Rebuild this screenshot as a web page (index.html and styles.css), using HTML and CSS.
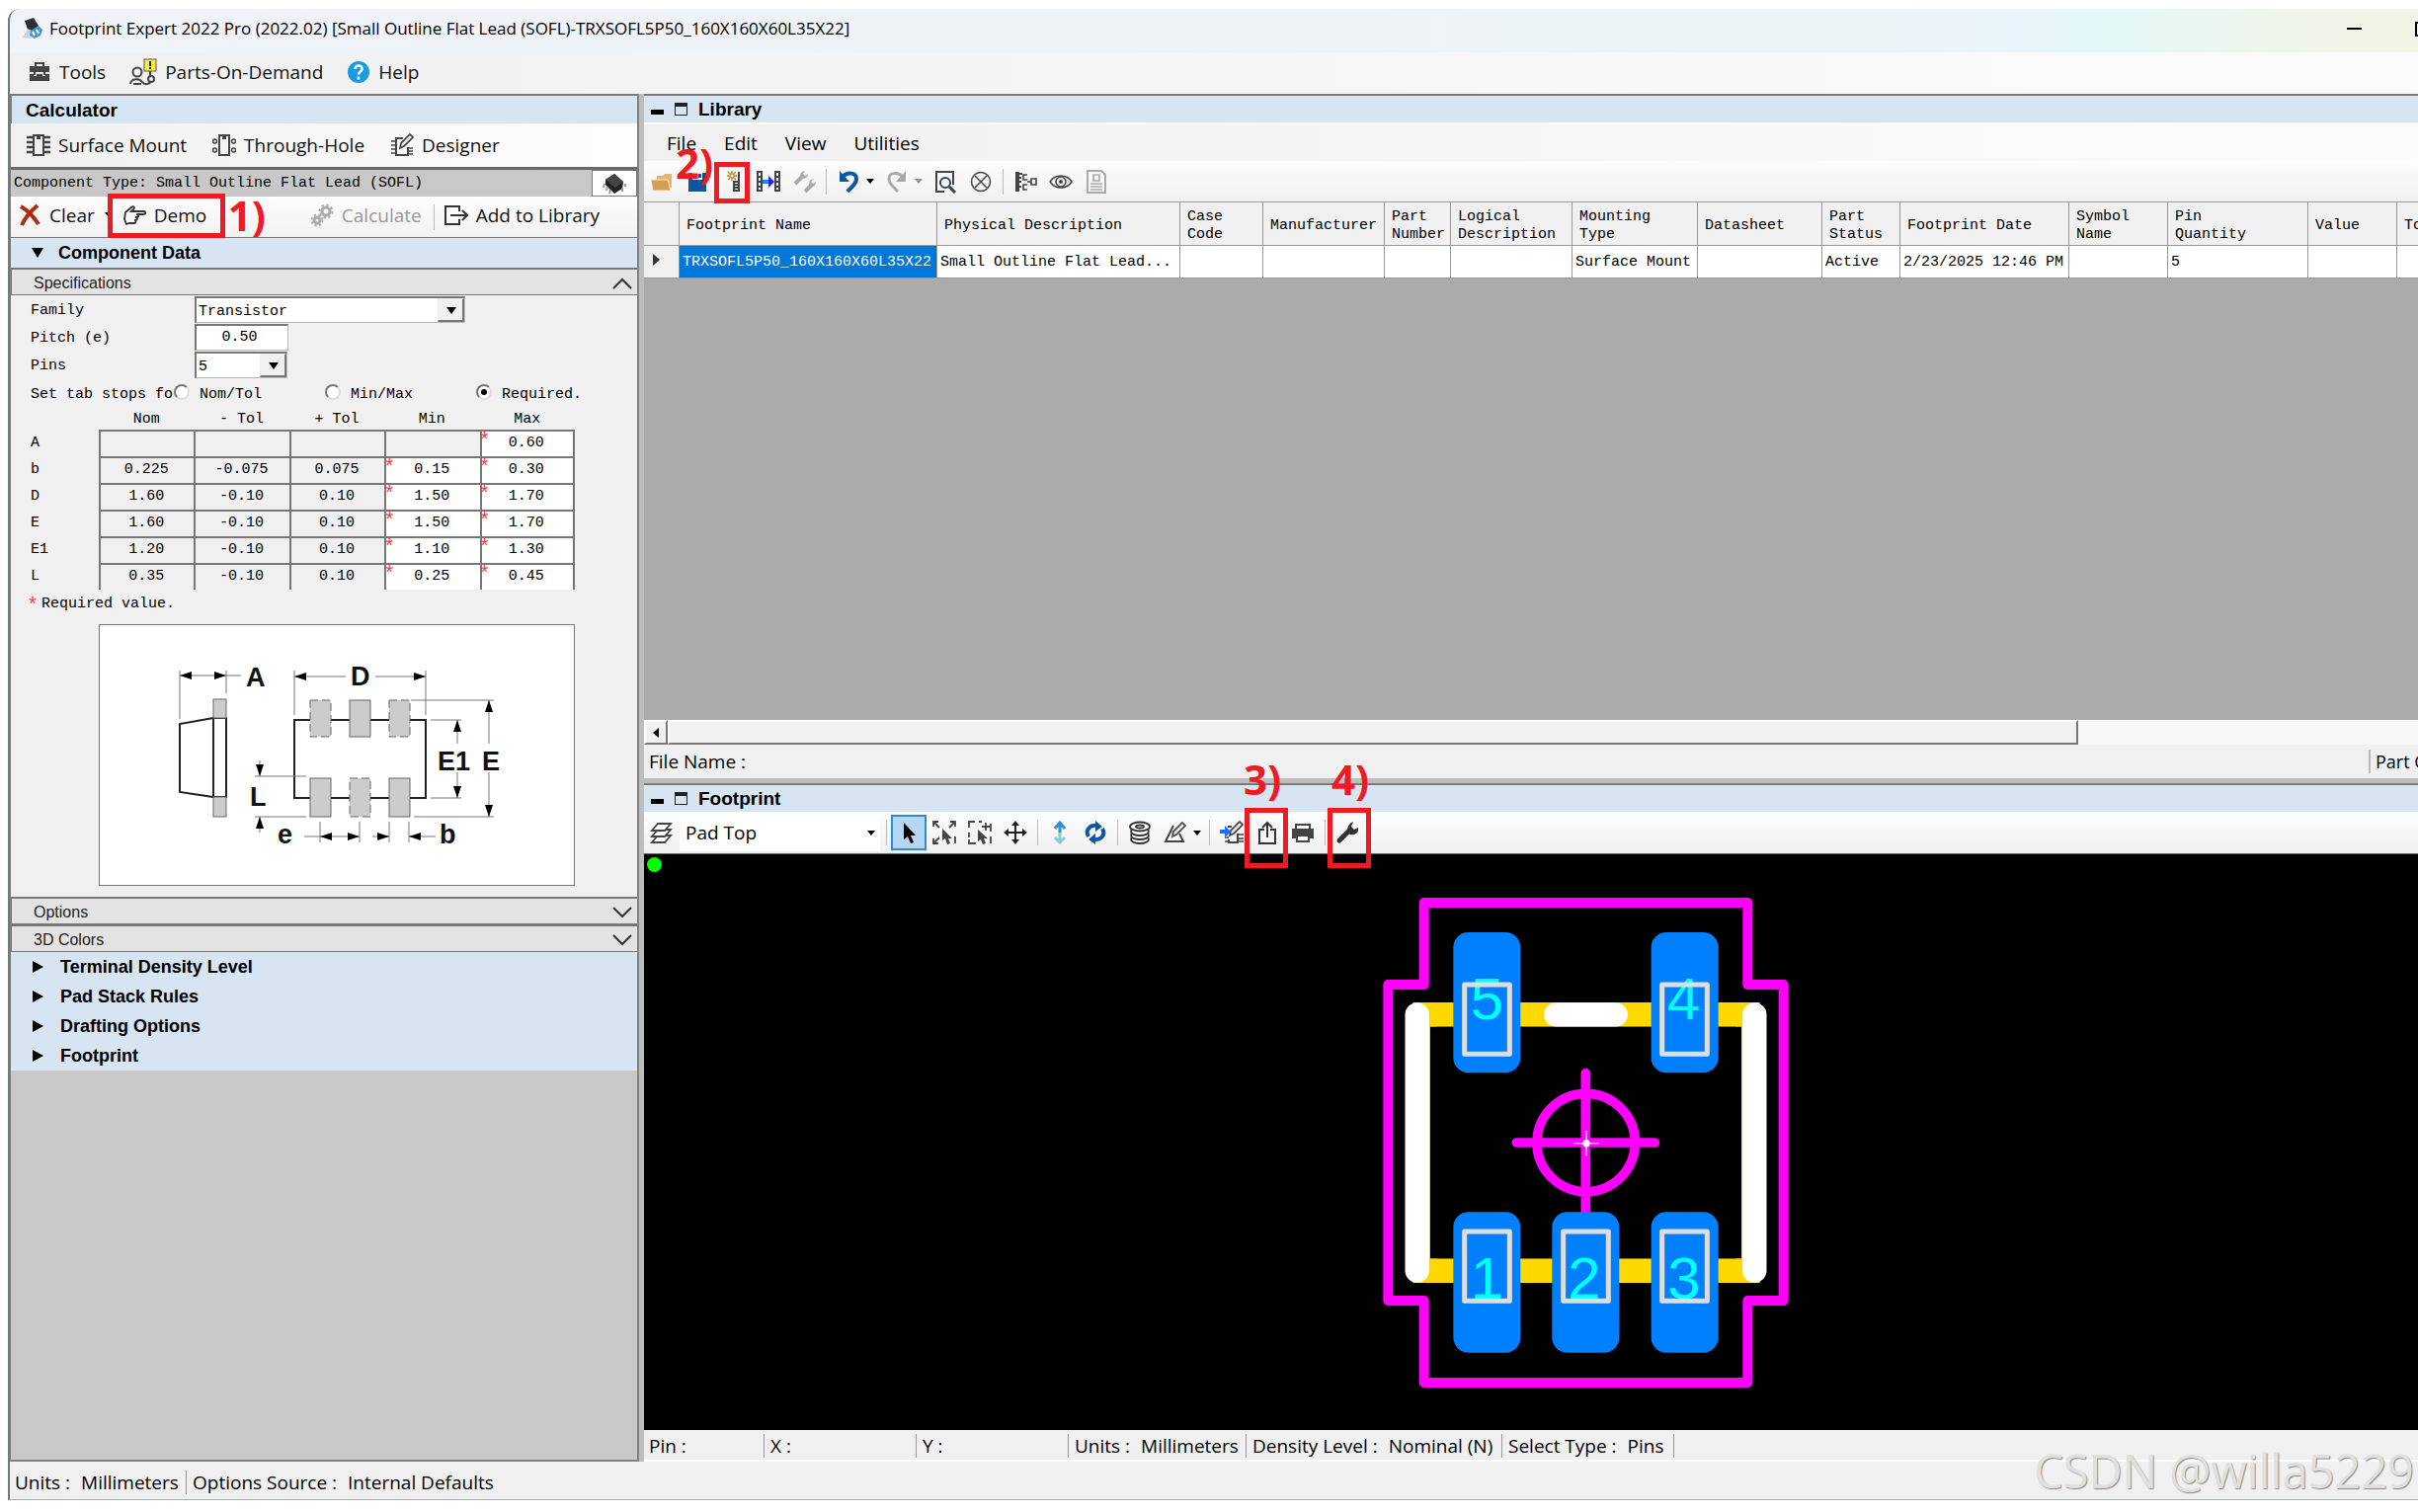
FILE: index.html
```html
<!DOCTYPE html>
<html lang="en">
<head>
<meta charset="utf-8">
<title>Footprint Expert 2022 Pro</title>
<link rel="stylesheet" href="styles.css">
</head>
<body>
<div class="app">
  <header class="titlebar">
    <svg class="icon" viewBox="0 0 24 24"><path d="M3 4l9-3 5 8-2 7-9-3z" fill="#2b3036"/><path d="M1 21l5-9 6 3-3 7z" fill="#c9d3da"/><path d="M9 14l8-5 4 4-2 6-6 3-5-3z" fill="#4d94cf"/><path d="M11 15l2 4M15 13l2 4" stroke="#fff" stroke-width="2"/></svg>
    <span class="title-text">Footprint Expert 2022 Pro (2022.02) [Small Outline Flat Lead (SOFL)-TRXSOFL5P50_160X160X60L35X22]</span>
    <div class="win-controls">
      <button aria-label="Minimize" class="win-min"></button>
      <button aria-label="Maximize" class="win-max"></button>
    </div>
  </header>

  <nav class="menubar">
    <button class="tool"><svg class="icon" viewBox="0 0 24 24"><path d="M8 6V3h8v3" fill="none" stroke="#444" stroke-width="2"/><path d="M2 6h20v6H2zM2 14h4v2h3v-2h6v2h3v-2h4v7H2z" fill="#444"/><path d="M7 12v3M17 12v3" stroke="#444" stroke-width="2"/></svg>Tools</button>
    <button class="tool pod"><svg class="icon wide" viewBox="0 0 28 28"><rect x="15" y="1" width="12" height="12" fill="#ffef3a" stroke="#555" stroke-width="1"/><path d="M21 3v5M21 9v2" stroke="#222" stroke-width="2"/><circle cx="8" cy="14" r="4.500" fill="none" stroke="#444" stroke-width="2"/><path d="M1 26c1-6 9-6 12-2 2 3 7 3 9-1M4 26h8M21 13v6" fill="none" stroke="#444" stroke-width="2"/><circle cx="22" cy="21" r="3" fill="none" stroke="#444" stroke-width="2"/></svg>Parts-On-Demand</button>
    <button class="tool"><svg class="icon" viewBox="0 0 24 24"><circle cx="12" cy="12" r="11" fill="#189be0"/><path d="M8.500 9c0-5 7.500-4.500 7 0-.3 2.500-3.500 2.500-3.500 5.500M12 16.500v3" fill="none" stroke="#fff" stroke-width="2.600"/></svg>Help</button>
  </nav>

  <main class="workspace">
    <section class="calculator">
      <h2 class="pane-title plain">Calculator</h2>
      <div class="bar calc-types">
        <button class="tool"><svg class="icon" viewBox="0 0 24 24"><path d="M7 2h10v20H7z" fill="none" stroke="#444" stroke-width="2"/><path d="M10 3h4v3h-4z" fill="#444"/><path d="M0 4h6M0 9h6M0 14h6M0 19h6M18 4h6M18 9h6M18 14h6M18 19h6" stroke="#444" stroke-width="2.400"/></svg>Surface Mount</button>
        <button class="tool"><svg class="icon" viewBox="0 0 24 24"><path d="M7 2h10v20H7z" fill="none" stroke="#444" stroke-width="2"/><path d="M10 3h4v3h-4z" fill="#444"/><g fill="none" stroke="#444" stroke-width="1.500"><circle cx="2.500" cy="8" r="2"/><circle cx="2.500" cy="17" r="2"/><circle cx="21.500" cy="8" r="2"/><circle cx="21.500" cy="17" r="2"/></g></svg>Through-Hole</button>
        <button class="tool"><svg class="icon" viewBox="0 0 24 24"><path d="M13 5H6v17h12v-8" fill="none" stroke="#444" stroke-width="2"/><path d="M1 8h5M1 12h5M1 16h5M1 20h5M18 15h5M18 18h5M18 21h5" stroke="#444" stroke-width="1.600"/><path d="M10 15l1-5 9-9 3 3-9 9z" fill="#eee" stroke="#444" stroke-width="1.700"/></svg>Designer</button>
      </div>
      <div class="type-row">
        <span class="type-name">Component Type: Small Outline Flat Lead (SOFL)</span>
        <button class="chip" aria-label="Component picture"><svg class="icon" viewBox="0 0 24 24"><path d="M3 8l9-6 9 8-1 7-8 5-9-9z" fill="#222"/><path d="M3 8l9-6 9 8-8 6z" fill="#444"/><path d="M2 12l-1 4M5 15l-1 4M8 18l-1 4M23 12v3M20 16v4" stroke="#999" stroke-width="2"/></svg></button>
      </div>
      <div class="bar actions">
        <button class="tool clear"><svg class="icon" viewBox="0 0 24 24"><path d="M3 3c7 4 14 12 18 18M20 2C13 8 7 15 4 22" fill="none" stroke="#ad2b10" stroke-width="4"/></svg>Clear<svg class="caret" viewBox="0 0 10 6"><path d="M0 0h10L5 6z"/></svg></button>
        <button class="tool demo"><svg class="icon" viewBox="0 0 24 24"><path d="M4 21l-2-5 1-7 6-5c2-2 4 0 2 2L9 8h12c3 0 3 3 0 3h-7c3 0 3 3 0 3h-1c3 0 2 3 0 3h-1c2 0 2 3 0 3H7z" fill="none" stroke="#333" stroke-width="1.800"/></svg>Demo<span class="callout"></span><b class="mark">1)</b></button>
        <button class="tool calc" disabled><svg class="icon" viewBox="0 0 24 24"><g fill="none" stroke="#aaa"><circle cx="16" cy="8" r="4" stroke-width="3"/><circle cx="16" cy="8" r="6.500" stroke-width="2" stroke-dasharray="2.500 2.500"/><circle cx="7" cy="17" r="3" stroke-width="3"/><circle cx="7" cy="17" r="5.500" stroke-width="2" stroke-dasharray="2.200 2.200"/></g></svg>Calculate</button>
        <span class="sep"></span>
        <button class="tool add"><svg class="icon" viewBox="0 0 24 24"><path d="M15 8V3H1v18h14v-5M6 12h16M18 7l5 5-5 5" fill="none" stroke="#333" stroke-width="2"/></svg>Add to Library</button>
      </div>
      <button class="tree open"><svg class="tri" viewBox="0 0 12 12"><path d="M0 1h12L6 11z"/></svg>Component Data</button>
      <button class="fold">Specifications<svg class="chev" viewBox="0 0 20 12"><path d="M1 11l9-9 9 9"/></svg></button>

      <div class="specs">
        <div class="form">
          <label for="family">Family</label><span class="combo family"><select id="family"><option>Transistor</option></select></span>
          <label for="pitch">Pitch (e)</label><input class="box" id="pitch" value="0.50">
          <label for="pins">Pins</label><span class="combo pins"><select id="pins"><option>5</option></select></span>
        </div>
        <div class="stops">
          <span class="stops-label">Set tab stops fo</span>
          <label><input type="radio" name="stops">Nom/Tol</label>
          <label><input type="radio" name="stops">Min/Max</label>
          <label><input type="radio" name="stops" checked>Required.</label>
        </div>
        <table class="dims">
          <thead><tr><td></td><th>Nom</th><th>- Tol</th><th>+ Tol</th><th>Min</th><th>Max</th></tr></thead>
          <tbody>
            <tr><th>A</th><td><input aria-label="A nom"></td><td><input aria-label="A minus tol"></td><td><input aria-label="A plus tol"></td><td><input aria-label="A min"></td><td class="req"><input aria-label="A max" value="0.60"></td></tr>
            <tr><th>b</th><td><input aria-label="b nom" value="0.225"></td><td><input aria-label="b minus tol" value="-0.075"></td><td><input aria-label="b plus tol" value="0.075"></td><td class="req"><input aria-label="b min" value="0.15"></td><td class="req"><input aria-label="b max" value="0.30"></td></tr>
            <tr><th>D</th><td><input aria-label="D nom" value="1.60"></td><td><input aria-label="D minus tol" value="-0.10"></td><td><input aria-label="D plus tol" value="0.10"></td><td class="req"><input aria-label="D min" value="1.50"></td><td class="req"><input aria-label="D max" value="1.70"></td></tr>
            <tr><th>E</th><td><input aria-label="E nom" value="1.60"></td><td><input aria-label="E minus tol" value="-0.10"></td><td><input aria-label="E plus tol" value="0.10"></td><td class="req"><input aria-label="E min" value="1.50"></td><td class="req"><input aria-label="E max" value="1.70"></td></tr>
            <tr><th>E1</th><td><input aria-label="E1 nom" value="1.20"></td><td><input aria-label="E1 minus tol" value="-0.10"></td><td><input aria-label="E1 plus tol" value="0.10"></td><td class="req"><input aria-label="E1 min" value="1.10"></td><td class="req"><input aria-label="E1 max" value="1.30"></td></tr>
            <tr><th>L</th><td><input aria-label="L nom" value="0.35"></td><td><input aria-label="L minus tol" value="-0.10"></td><td><input aria-label="L plus tol" value="0.10"></td><td class="req"><input aria-label="L min" value="0.25"></td><td class="req"><input aria-label="L max" value="0.45"></td></tr>
          </tbody>
        </table>
        <p class="note"><span class="star">*</span>Required value.</p>
        <svg class="diagram" viewBox="0 0 480 263">
          <defs><marker id="ar" viewBox="0 0 12 8" refX="12" refY="4" markerWidth="12" markerHeight="8" markerUnits="userSpaceOnUse" orient="auto-start-reverse"><path d="M0 0L12 4 0 8z"/></marker></defs>
          <g fill="none" stroke="#222" stroke-width="2"><path d="M115 94L81 100v69l34 5z"/><rect x="115" y="94" width="13" height="80"/><rect x="197" y="96" width="133" height="79"/></g>
          <g fill="#ccc" stroke="#666"><rect x="115" y="75" width="13" height="19"/><rect x="115" y="174" width="13" height="20"/><rect x="253" y="76" width="21" height="37"/><rect x="213" y="155" width="21" height="39"/><rect x="293" y="155" width="21" height="39"/><g stroke-dasharray="8 4"><rect x="213" y="76" width="21" height="37"/><rect x="293" y="76" width="21" height="37"/><rect x="253" y="155" width="21" height="39"/></g></g>
          <g fill="none" stroke="#777"><path d="M81 46v49M128 46v23M128 51h15M197 46v45M330 46v45M315 76h84M318 194h81M335 96h31M335 175h31M157 153h52M157 194h52M223 199v21M263 199v21M293 199v21M313 199v21M207 214h16"/>
          <path marker-start="url(#ar)" marker-end="url(#ar)" d="M81 51h47"/>
          <path marker-start="url(#ar)" marker-end="url(#ar)" d="M223 214h40"/><path marker-start="url(#ar)" d="M197 52h52"/><path marker-end="url(#ar)" d="M279 52h51"/><path marker-start="url(#ar)" d="M394 76v44"/><path marker-end="url(#ar)" d="M394 149v45"/><path marker-start="url(#ar)" d="M362 96v24"/><path marker-end="url(#ar)" d="M362 149v26"/><path marker-end="url(#ar)" d="M162 137v16"/><path marker-start="url(#ar)" d="M162 194v16"/><path marker-end="url(#ar)" d="M276 214h17"/><path marker-start="url(#ar)" d="M313 214h27"/></g>
          <g class="dia-text"><text x="148" y="62">A</text><text x="254" y="61">D</text><text x="342" y="147">E1</text><text x="387" y="147">E</text><text x="152" y="183">L</text><text x="180" y="221">e</text><text x="344" y="221">b</text></g>
        </svg>
      </div>

      <button class="fold">Options<svg class="chev" viewBox="0 0 20 12"><path d="M1 1l9 9 9-9"/></svg></button>
      <button class="fold">3D Colors<svg class="chev" viewBox="0 0 20 12"><path d="M1 1l9 9 9-9"/></svg></button>
      <button class="tree"><svg class="tri" viewBox="0 0 12 12"><path d="M1 0v12l11-6z"/></svg>Terminal Density Level</button>
      <button class="tree"><svg class="tri" viewBox="0 0 12 12"><path d="M1 0v12l11-6z"/></svg>Pad Stack Rules</button>
      <button class="tree"><svg class="tri" viewBox="0 0 12 12"><path d="M1 0v12l11-6z"/></svg>Drafting Options</button>
      <button class="tree"><svg class="tri" viewBox="0 0 12 12"><path d="M1 0v12l11-6z"/></svg>Footprint</button>
    </section>

    <div class="right">
      <section class="library">
        <h2 class="pane-title"><span class="p-min"></span><span class="p-max"></span>Library</h2>
        <nav class="lib-menu"><button>File</button><button>Edit</button><button>View</button><button>Utilities</button></nav>
        <div class="iconbar">
          <button aria-label="Open"><svg class="icon" viewBox="0 0 24 24"><path d="M7 6h6l2-2h7v14H7z" fill="#e2b56f"/><path d="M1 10h17l3 11H3z" fill="#d39f52" stroke="#f6e7cd"/></svg></button>
          <button aria-label="Save" class="anchor"><svg class="icon" viewBox="0 0 24 24"><path d="M3 3h18v19H3z" fill="#0a58a5"/><path d="M7 3h10v7H7z" fill="#fff"/><path d="M13 4h3v4h-3z" fill="#0a58a5"/></svg><b class="mark">2)</b></button>
          <button aria-label="New" class="anchor"><svg class="icon" viewBox="0 0 24 24"><path d="M13 12h5v9h-5zM13 15h5M13 18h5M18 12V2" fill="none" stroke="#444" stroke-width="2"/><path d="M11 1v10M6 6h10M7 2l8 8M15 2l-8 8" stroke="#c08024" stroke-width="1.400"/><circle cx="11" cy="6" r="2" fill="#fff" stroke="#c08024"/></svg><span class="callout"></span></button>
          <button aria-label="Copy rows"><svg class="icon" viewBox="0 0 24 24"><path d="M1 2h4v19H1zM19 2h4v19h-4z" fill="#fff" stroke="#444" stroke-width="2"/><path d="M1 7h4M1 12h4M1 17h4M19 7h4M19 12h4M19 17h4" stroke="#444" stroke-width="2"/><path d="M6 10h7v4H6z" fill="#1488ff"/><path d="M12 6l6 6-6 6z" fill="#2222ee"/></svg></button>
          <button aria-label="Options"><svg class="icon" viewBox="0 0 24 24"><path d="M3 14l7-7M13 22l7-7" stroke="#aaa" stroke-width="4"/><path d="M13 1c-4 0-6 4-4 7 3 2 7 0 7-4l-3 2-2-2zM22 9c-4 0-6 4-4 7 3 2 6 0 6-4l-3 2-2-2z" fill="#aaa"/></svg></button>
          <span class="sep"></span>
          <button aria-label="Undo"><svg class="icon" viewBox="0 0 24 24"><path d="M5 8c5-6 15-6 15 1 0 6-5 8-9 13" fill="none" stroke="#0a58a5" stroke-width="4"/><path d="M3 1v11h10z" fill="#0a58a5"/></svg></button>
          <span class="drop"><svg class="caret" viewBox="0 0 10 6"><path d="M0 0h10L5 6z"/></svg></span>
          <button aria-label="Redo"><svg class="icon" viewBox="0 0 24 24"><path d="M19 8C14 2 4 2 4 9c0 6 5 8 9 13" fill="none" stroke="#aaa" stroke-width="3"/><path d="M21 1v11H11z" fill="#aaa"/></svg></button>
          <span class="drop off"><svg class="caret" viewBox="0 0 10 6"><path d="M0 0h10L5 6z"/></svg></span>
          <button aria-label="Find"><svg class="icon" viewBox="0 0 24 24"><path d="M11 22H3V2h17v13" fill="none" stroke="#444" stroke-width="2"/><circle cx="12" cy="13" r="5" fill="none" stroke="#345" stroke-width="2"/><path d="M16 17l6 6" stroke="#345" stroke-width="3"/></svg></button>
          <button aria-label="Cancel"><svg class="icon" viewBox="0 0 24 24"><circle cx="12" cy="12" r="9.500" fill="none" stroke="#444" stroke-width="1.500"/><path d="M6 6l12 12M18 6L6 18" stroke="#444" stroke-width="1.500"/></svg></button>
          <span class="sep"></span>
          <button aria-label="Tree view"><svg class="icon" viewBox="0 0 24 24"><path d="M2 2h4v20H2z" fill="#444"/><path d="M6 4h3M6 8h2M6 12h2M6 17h2" stroke="#444" stroke-width="2"/><path d="M14 5h-4v5h4M14 15h-4v5h4M14 12h4M18 9h5v6h-5z" fill="none" stroke="#444" stroke-width="1.600"/></svg></button>
          <button aria-label="Show"><svg class="icon" viewBox="0 0 24 24"><path d="M1 12c5-8 17-8 22 0-5 8-17 8-22 0z" fill="#eee" stroke="#444" stroke-width="1.500"/><circle cx="12" cy="12" r="5" fill="none" stroke="#444" stroke-width="1.500"/><circle cx="12" cy="12" r="2" fill="#444"/></svg></button>
          <button aria-label="Report"><svg class="icon" viewBox="0 0 24 24"><path d="M3 1h14l4 4v18H3z" fill="none" stroke="#aaa" stroke-width="2"/><path d="M9 5h6v6H9zM6 14h12M6 17h12M6 20h12" fill="none" stroke="#aaa" stroke-width="1.700"/></svg></button>
        </div>
        <div class="grid-wrap">
          <table class="grid">
            <colgroup><col class="w36"><col class="w261"><col class="w246"><col class="w84"><col class="w123"><col class="w67"><col class="w123"><col class="w127"><col class="w126"><col class="w79"><col class="w171"><col class="w100"><col class="w142"><col class="w90"><col class="w84"></colgroup>
            <thead><tr><td></td><th>Footprint Name</th><th>Physical Description</th><th>Case<br>Code</th><th>Manufacturer</th><th>Part<br>Number</th><th>Logical<br>Description</th><th>Mounting<br>Type</th><th>Datasheet</th><th>Part<br>Status</th><th>Footprint Date</th><th>Symbol<br>Name</th><th>Pin<br>Quantity</th><th>Value</th><th>To</th></tr></thead>
            <tbody><tr><td class="rowhead"><svg class="tri" viewBox="0 0 12 12"><path d="M2 0v12l7-6z" fill="#333"/></svg></td><td class="sel">TRXSOFL5P50_160X160X60L35X22</td><td>Small Outline Flat Lead...</td><td></td><td></td><td></td><td></td><td>Surface Mount</td><td></td><td>Active</td><td>2/23/2025 12:46 PM</td><td></td><td>5</td><td></td><td></td></tr></tbody>
          </table>
        </div>
        <div class="scroll"><button aria-label="Scroll left"><svg viewBox="0 0 6 10"><path d="M6 0v10L0 5z"/></svg></button><span class="thumb"></span></div>
        <div class="lib-status"><span>File Name :</span><span class="part">Part C</span></div>
      </section>

      <section class="footprint">
        <h2 class="pane-title"><span class="p-min"></span><span class="p-max"></span>Footprint</h2>
        <div class="iconbar tall">
          <button aria-label="Layers"><svg class="icon" viewBox="0 0 24 24"><g fill="#fff" stroke="#444" stroke-width="1.800"><path d="M2 22l6-7h13l-6 7z"/><path d="M2 16l6-7h13l-6 7z"/><path d="M2 10l6-7h13l-6 7z"/></g></svg></button>
          <span class="layer"><select aria-label="Layer"><option>Pad Top</option></select><svg class="caret" viewBox="0 0 10 6"><path d="M0 0h10L5 6z"/></svg></span>
          <span class="sep"></span>
          <button aria-label="Select" class="on"><svg class="icon" viewBox="0 0 24 24"><path d="M7 2v17l4-3 3 7 3-1-3-7h5z"/></svg></button>
          <button aria-label="Zoom fit"><svg class="icon" viewBox="0 0 24 24"><path d="M1 6V1h5M1 1l6 6M18 1h5v5M23 1l-6 6M1 18v5h5M1 23l6-6M23 16v7" fill="none" stroke="#444" stroke-width="1.800"/><path d="M10 8v12l3-2 2 6 3-1-2-5h4z" fill="#444"/></svg></button>
          <button aria-label="Zoom area"><svg class="icon" viewBox="0 0 24 24"><path d="M1 7V1h6M18 2v8M14 6h8M1 12v5M1 19v4h7M11 1h3M23 3v8M23 16v7" fill="none" stroke="#444" stroke-width="1.800"/><path d="M10 9v12l3-2 2 5 3-1-2-5h4z" fill="#444"/></svg></button>
          <button aria-label="Pan"><svg class="icon" viewBox="0 0 24 24"><path d="M12 4v16M4 12h16" stroke="#222" stroke-width="2"/><path d="M12 0l4 5H8zM12 24l4-5H8zM0 12l5-4v8zM24 12l-5-4v8z" fill="#222"/></svg></button>
          <span class="sep"></span>
          <button aria-label="Flip"><svg class="icon" viewBox="0 0 24 24"><path d="M12 4v8M7 8l5-6 5 6" fill="none" stroke="#2d92c8" stroke-width="3"/><path d="M12 12v8M7 17l5 5 5-5" fill="none" stroke="#8fc9cd" stroke-width="3"/></svg></button>
          <button aria-label="Rotate"><svg class="icon" viewBox="0 0 24 24"><path d="M5 16C1 9 7 4 14 5M19 8c4 7-2 12-9 11" fill="none" stroke="#0a58a5" stroke-width="4"/><path d="M12 0v11l7-5zM12 24V13l-7 6z" fill="#0a58a5"/></svg></button>
          <span class="sep"></span>
          <button aria-label="Pad stack"><svg class="icon" viewBox="0 0 24 24"><g fill="#fff" stroke="#333" stroke-width="1.800"><ellipse cx="12" cy="19" rx="9" ry="4"/><ellipse cx="12" cy="15" rx="9" ry="4"/><ellipse cx="12" cy="11" rx="9" ry="4"/><ellipse cx="12" cy="6" rx="10" ry="4.500"/><ellipse cx="12" cy="6" rx="4" ry="1.500"/></g></svg></button>
          <button aria-label="Draft"><svg class="icon" viewBox="0 0 24 24"><path d="M10 5L2 21h18l-4-8" fill="none" stroke="#444" stroke-width="2"/><path d="M9 16l1-5 9-9 3 3-9 9z" fill="#eee" stroke="#444" stroke-width="1.700"/></svg></button>
          <span class="drop"><svg class="caret" viewBox="0 0 10 6"><path d="M0 0h10L5 6z"/></svg></span>
          <span class="sep"></span>
          <button aria-label="Import"><svg class="icon" viewBox="0 0 24 24"><path d="M8 6h4M9 19v3h9v-9" fill="none" stroke="#444" stroke-width="2"/><path d="M18 14h6M18 18h6M18 21h6M5 17h4M5 21h4" stroke="#444" stroke-width="1.600"/><path d="M10 15l1-5 9-9 3 3-9 9z" fill="#eee" stroke="#444" stroke-width="1.700"/><path d="M0 9h5V5l6 6-6 6v-4H0z" fill="#1f6dff"/></svg></button>
          <button aria-label="Export" class="anchor"><svg class="icon" viewBox="0 0 24 24"><path d="M9 9H4v14h16V9h-5M12 17V2M7 7l5-5 5 5" fill="none" stroke="#333" stroke-width="2"/></svg><span class="callout"></span><b class="mark">3)</b></button>
          <button aria-label="Print"><svg class="icon" viewBox="0 0 24 24"><path d="M5 8V4h14v4M6 15h12v6H6z" fill="#fff" stroke="#444" stroke-width="2"/><path d="M1 8h22v10h-4v-4H5v4H1z" fill="#444"/></svg></button>
          <span class="sep"></span>
          <button aria-label="Settings" class="anchor settings"><svg class="icon" viewBox="0 0 24 24"><path d="M4 20L14 10" stroke="#333" stroke-width="5" stroke-linecap="round"/><path d="M18 1l-2 5 3 3 4-2c1 5-3 8-8 7-5-2-3-11 3-13z" fill="#333"/></svg><span class="callout"></span><b class="mark">4)</b></button>
        </div>
        <div class="canvas">
          <span class="dot"></span>
          <svg class="board" viewBox="0 0 1350 1590">
            <path d="M188 412h980v778H188z" fill="none" stroke="#ffd800" stroke-width="74"/>
            <path d="M204 449h945v704H204z" fill="#000"/>
            <path d="M164 412v778M1189 412v778M586 412h181" stroke="#fff" stroke-width="73" stroke-linecap="round"/>
            <path d="M185 72h983v249h109v960h-109v249H185v-249H76V321h109z" fill="none" stroke="#f0f" stroke-width="30" stroke-linejoin="round"/>
            <g fill="none" stroke="#f0f" stroke-width="29" stroke-linecap="round"><circle cx="677" cy="801" r="149"/><path d="M676 590v440M466 801h420"/></g>
            <path d="M640 803h77M678 765v76" stroke="#fff" stroke-width="4"/><circle cx="678" cy="803" r="11" fill="#fff"/>
            <g fill="#0080ff"><rect x="274" y="162" width="204" height="427" rx="46"/><rect x="875" y="162" width="204" height="427" rx="46"/><rect x="274" y="1012" width="204" height="427" rx="46"/><rect x="574" y="1012" width="204" height="427" rx="46"/><rect x="875" y="1012" width="204" height="427" rx="46"/></g>
            <g class="pin-text"><text x="376" y="427">5</text><text x="973" y="427">4</text><text x="376" y="1274">1</text><text x="672" y="1274">2</text><text x="975" y="1274">3</text></g>
            <g fill="none" stroke="#ddd" stroke-width="15" stroke-linejoin="round"><rect x="308" y="321" width="137" height="211"/><rect x="908" y="321" width="137" height="211"/><rect x="308" y="1071" width="137" height="211"/><rect x="608" y="1071" width="137" height="211"/><rect x="908" y="1071" width="137" height="211"/></g>
          </svg>
        </div>
        <div class="foot-status"><span class="c1">Pin :</span><span class="c2">X :</span><span class="c2">Y :</span><span class="c3"><i>Units :</i><i>Millimeters</i></span><span class="c4"><i>Density Level :</i><i>Nominal (N)</i></span><span class="c5"><i>Select Type :</i><i>Pins</i></span></div>
      </section>
    </div>
  </main>

  <footer class="statusbar"><span class="s1"><i>Units :</i><i>Millimeters</i></span><span><i>Options Source :</i><i>Internal Defaults</i></span><div class="watermark">CSDN @willa5229</div></footer>
</div>
</body>
</html>
```
FILE: styles.css
```css
* { box-sizing: border-box; }
body { margin: 0; padding: 9px 0 12px 8px; background: #fff; color: #000; font: 18px/24px "Open Sans", sans-serif; overflow: hidden; }
button, input, select { font: inherit; color: inherit; margin: 0; padding: 0; border: 0; background: none; border-radius: 0; }
button { display: flex; align-items: center; white-space: nowrap; }
i { font-style: normal; }
.app { display: flex; flex-direction: column; height: calc(100vh - 21px); background: #f0f0f0; border-left: 2px solid #6f7a7a; border-bottom: 1px solid #a3b1b1; border-top-left-radius: 12px; overflow: hidden; }
.icon { width: 24px; height: 24px; flex: none; }
.icon.wide { width: 28px; height: 28px; }
.caret { width: 8px; height: 5px; flex: none; }

.titlebar { flex: none; height: 44px; display: flex; align-items: center; padding: 0 0 4px 12px; gap: 4px; font-size: 17px; background: linear-gradient(90deg, #f0f3f8, #eef3f7 50%, #ecf4f8 78%, #e9f4fc 83%, #e2f8f7 87%, #eef4ea 94%, #f4f4e4); }
.titlebar .title-text { white-space: nowrap; }
.win-controls { margin-left: auto; display: flex; gap: 54px; align-items: center; }
.win-min { width: 15px; height: 2px; background: #000; }
.win-max { width: 3px; height: 15px; border: 2px solid #000; border-right: 0; }

.menubar { flex: none; height: 42px; display: flex; align-items: center; padding: 0 0 2px 18px; gap: 24px; background: linear-gradient(90deg, #f0f0f0, #fbfbfb); }
.tool { gap: 8px; font-size: 19px; color: #111; }

.workspace { flex: 1; min-height: 0; display: flex; background: #bdbdbd; }
.calculator { flex: none; width: 637px; display: flex; flex-direction: column; background: #c8c8c8; border: 2px solid #808080; border-left-width: 1px; border-top: 0; }
.pane-title { flex: none; margin: 0; height: 29px; border-top: 2px solid #7a7a7a; display: flex; align-items: center; font: bold 19px/24px "Liberation Sans", Arial, sans-serif; background: #d7e4f1; padding-left: 7px; }
.pane-title.plain { padding: 2px 0 0 14px; height: 30px; border-left: 1px solid #808080; }
.p-min { width: 13px; height: 5px; background: #000; margin-top: 6px; }
.p-max { width: 13px; height: 13px; border: 1px solid #222; border-top-width: 4px; margin: 0 11px; }
.bar { flex: none; display: flex; align-items: center; background: linear-gradient(#fdfdfd, #f2f2f2); }
.calc-types { height: 44px; padding-left: 16px; gap: 26px; background: linear-gradient(90deg, #f0f0f0, #fdfdfd); }
.type-row { flex: none; height: 30px; border-top: 3px solid #696969; display: flex; justify-content: space-between; font: 15px/28px "Liberation Mono", monospace; padding-left: 3px; }
.chip { width: 46px; justify-content: center; background: #fff; border: 1px solid #777; }
.actions { height: 41px; align-items: flex-start; }
.actions .tool { height: 37px; }
.clear { margin-left: 7px; }
.clear .caret { margin-left: 2px; }
.demo { position: relative; margin-left: 10px; }
.callout { position: absolute; border: 5px solid #ed1c24; }
.mark { position: absolute; font: bold 42px/44px "Open Sans", sans-serif; color: #ed1c24; }
.demo .callout { left: -15px; right: -19px; top: -3px; height: 45px; }
.demo .mark { left: 107px; top: -3px; }
.calc { margin-left: auto; color: #999; }
.actions .sep { margin: 8px 10px 0 12px; width: 1px; height: 26px; background: #bbb; }
.add { margin-right: 38px; }
.tree { flex: none; height: 30px; padding-left: 21px; gap: 17px; background: #d7e4f1; font: bold 18px/24px "Liberation Sans", Arial, sans-serif; }
.tree.open { height: 31px; border-top: 1px solid #777; gap: 15px; }
.tri { width: 12px; height: 12px; flex: none; }
.fold { flex: none; height: 28px; border: 1px solid #777; border-width: 2px 0 1px 1px; padding: 2px 5px 0 22px; justify-content: space-between; background: #e3e3e3; color: #222; font: 16px/22px "Liberation Sans", Arial, sans-serif; }
.chev { width: 20px; height: 12px; fill: none; stroke: #333; stroke-width: 2; }

.specs { flex: none; background: #f0f0f0; font: 15px/24px "Liberation Mono", monospace; padding: 0 0 12px 20px; }
.form { display: grid; grid-template-columns: 166px 274px; grid-auto-rows: 28px; align-items: center; }
.form label { padding-top: 4px; }
.box, .combo { background: #fff; border: 1px solid #bbb; border-top: 2px solid #777; border-left: 2px solid #777; height: 27px; }
.box { width: 95px; text-align: center; padding: 0 5px 0 0; }
.combo { position: relative; display: block; }
.combo.pins { width: 94px; }
select { appearance: none; width: 100%; height: 100%; padding: 2px 2px 0; }
.combo::before { content: ""; position: absolute; right: 0; top: 0; bottom: 0; width: 24px; background: #f0f0f0; border: 1px solid #eee; border-right: 2px solid #777; border-bottom: 2px solid #777; pointer-events: none; }
.combo::after { content: ""; position: absolute; right: 8px; top: 9px; border: 5px solid transparent; border-top: 7px solid #000; border-bottom: 0; pointer-events: none; }
.stops { display: flex; align-items: center; height: 30px; padding-top: 4px; }
.stops-label { width: 145px; white-space: nowrap; }
.stops label { display: flex; align-items: center; gap: 10px; width: 153px; }
.stops label:last-child { width: auto; }
input[type=radio] { appearance: none; width: 16px; height: 16px; border-radius: 50%; background: #fff; border: 2px solid #ddd; border-top-color: #777; border-left-color: #777; margin-top: -6px; display: grid; place-items: center; }
input[type=radio]:checked::before { content: ""; width: 6px; height: 6px; border-radius: 50%; background: #000; }
.dims { border-collapse: separate; border-spacing: 0; table-layout: fixed; width: 551px; }
.dims th, .dims td { padding: 0; font-weight: normal; height: 27px; line-height: 22px; position: relative; }
.dims thead th { height: 22px; padding-top: 2px; line-height: 20px; }
.dims thead td { width: 69px; height: 22px; }
.dims tbody th { text-align: left; }
.dims tbody td { border-left: 2px solid #777; border-top: 2px solid #777; }
.dims tbody td:last-child { border-right: 2px solid #777; }
.dims input { display: block; width: 100%; height: 25px; text-align: center; padding: 0 2px 2px 0; }
.dims .req { background: #fff; }
.dims .req::before { content: "*"; position: absolute; left: -3px; top: 0; font-size: 20px; line-height: 20px; color: #ff3b3b; }
.note { margin: 0 0 9px -4px; padding-top: 3px; line-height: 23px; }
.star { color: #ff3b3b; display: inline-block; width: 15px; font-size: 20px; line-height: 20px; vertical-align: -4px; }
.diagram { display: block; width: 480px; height: 263px; margin-left: 70px; background: #fff; outline: 1px solid #777; }
.dia-text { font: bold 27px "Liberation Sans", Arial, sans-serif; fill: #111; }

.right { flex: 1; min-width: 0; margin-left: 5px; display: flex; flex-direction: column; gap: 5px; }
.library, .footprint { min-height: 0; display: flex; flex-direction: column; background: #f0f0f0; font-size: 19px; }
.library { flex: 693 1 0; }
.footprint { flex: 687 1 0; }
.lib-menu { flex: none; height: 39px; display: flex; align-items: center; padding-left: 23px; gap: 28px; background: linear-gradient(90deg, #f0f0f0, #fcfcfc); border-top: 2px solid #fff; }
.iconbar { flex: none; height: 41px; display: flex; align-items: center; background: linear-gradient(#fdfdfd, #f0f0f0); }
.iconbar.tall { height: 42px; }
.iconbar button { width: 36px; height: 36px; justify-content: center; }
.iconbar .on { background: #b5d7f3; border: 2px solid #2a8dd8; }
.iconbar .sep { width: 9px; height: 26px; border-left: 1px solid #bbb; margin-left: 4px; margin-right: -4px; }
.drop { width: 13px; display: flex; }
.tall .drop { width: 12px; }
.off { opacity: .4; }
.anchor { position: relative; }
.library .anchor .mark { left: -4px; top: -23px; }
.library .anchor .callout { left: -1px; right: 1px; top: -2px; height: 42px; z-index: 1; }
.footprint .anchor .callout { left: -5px; width: 44px; top: -7px; height: 61px; z-index: 1; }
.footprint .anchor .mark { left: -6px; top: -58px; z-index: 1; }
.footprint .settings .callout { left: -2px; }
.footprint .settings .mark { left: 2px; }
.layer { position: relative; width: 203px; height: 38px; background: #fff; margin-right: 2px; }
.layer select { padding: 0 0 0 6px; }
.layer .caret { position: absolute; right: 5px; top: 17px; pointer-events: none; }
.grid-wrap { flex: 1; min-height: 0; overflow: hidden; background: #ababab; }
.grid { table-layout: fixed; border-collapse: separate; border-spacing: 0; width: 1859px; font: 15px/18px "Liberation Mono", monospace; white-space: nowrap; }
.grid th, .grid td { padding: 4px 0 0 3px; border-right: 1px solid #999; border-bottom: 1px solid #999; text-align: left; font-weight: normal; overflow: hidden; background: #fff; }
.grid thead th, .grid thead td { height: 45px; padding-left: 7px; background: #f0f0f0; border-top: 1px solid #999; }
.grid tbody td { height: 33px; padding-top: 2px; }
.grid .rowhead { background: #f0f0f0; padding-left: 7px; }
.grid .sel { background: #0078d7; color: #fff; }
.w36 { width: 36px; } .w261 { width: 261px; } .w246 { width: 246px; } .w84 { width: 84px; } .w123 { width: 123px; } .w67 { width: 67px; } .w127 { width: 127px; } .w126 { width: 126px; } .w79 { width: 79px; } .w171 { width: 171px; } .w100 { width: 100px; } .w142 { width: 142px; } .w90 { width: 90px; }
.scroll { flex: none; height: 25px; display: flex; background: #f8f8f8; }
.scroll button, .thumb { background: #f0f0f0; border: 2px solid #777; border-top-color: #fff; border-left-color: #fff; }
.scroll button { width: 24px; justify-content: center; }
.scroll svg { width: 6px; height: 10px; }
.thumb { width: 79.5%; }
.lib-status { flex: none; height: 34px; display: flex; align-items: center; justify-content: space-between; padding-left: 5px; overflow: hidden; }
.part { width: 50px; padding-left: 5px; border-left: 2px solid #bbb; white-space: nowrap; overflow: hidden; font-size: 18px; }
.canvas { flex: 1; min-height: 0; position: relative; background: #000; border-top: 1px solid #666; padding: 25px 0 0 728px; overflow: hidden; }
.dot { position: absolute; left: 3px; top: 3px; width: 15px; height: 15px; border-radius: 50%; background: #0f0; }
.board { display: block; width: 450px; height: 530px; }
.pin-text { font: 180px "Liberation Sans", Arial, sans-serif; fill: #0ff; text-anchor: middle; }
.foot-status { flex: none; height: 32px; display: flex; align-items: center; padding: 2px 0 0 5px; white-space: nowrap; border-bottom: 2px solid #fff; }
.foot-status span { height: 24px; border-right: 1px solid #999; display: flex; gap: 11px; margin-right: 6px; }
.c1 { width: 117px; } .c2 { width: 148px; } .c3 { width: 174px; } .c4 { width: 253px; } .c5 { width: 168px; }
.statusbar { flex: none; height: 38px; display: flex; align-items: center; padding: 4px 0 0 5px; position: relative; white-space: nowrap; font-size: 19px; }
.statusbar span { display: flex; gap: 11px; }
.statusbar .s1 { width: 174px; border-right: 1px solid #999; margin-right: 6px; }
.watermark { position: absolute; right: 4px; bottom: 0; font-size: 47px; line-height: 58px; color: #e0e0e0; text-shadow: 1px 1px 1px #888; }
```
